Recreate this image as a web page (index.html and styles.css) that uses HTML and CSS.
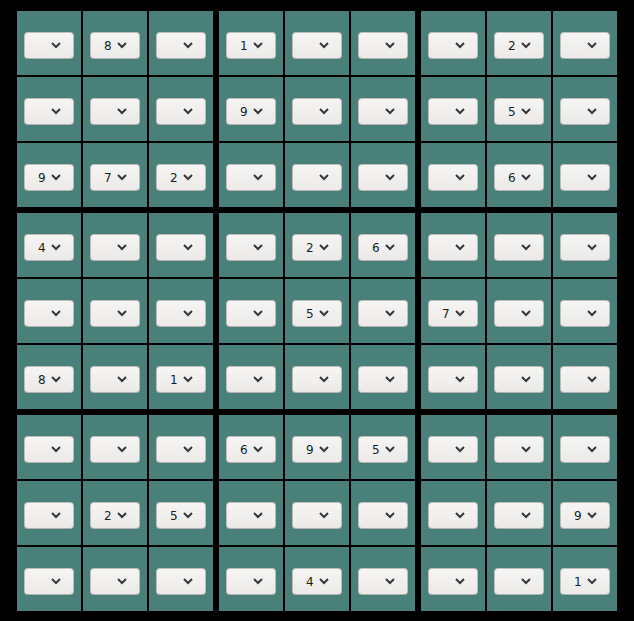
FILE: index.html
```html
<!DOCTYPE html>
<html>
<head>
<meta charset="utf-8">
<title>Sudoku</title>
<link rel="stylesheet" href="styles.css">
</head>
<body>
<svg width="0" height="0" class="defs"><defs><symbol id="chev" viewBox="0 0 10 7"><polyline points="1,1 5,5 9,1" fill="none" stroke="#383838" stroke-width="2"/></symbol></defs></svg>
<div class="board">
  <div class="box">
    <div class="cell"><div class="sel"><span class="val"></span><svg class="chev"><use href="#chev"/></svg></div></div>
    <div class="cell"><div class="sel"><span class="val">8</span><svg class="chev"><use href="#chev"/></svg></div></div>
    <div class="cell"><div class="sel"><span class="val"></span><svg class="chev"><use href="#chev"/></svg></div></div>
    <div class="cell"><div class="sel"><span class="val"></span><svg class="chev"><use href="#chev"/></svg></div></div>
    <div class="cell"><div class="sel"><span class="val"></span><svg class="chev"><use href="#chev"/></svg></div></div>
    <div class="cell"><div class="sel"><span class="val"></span><svg class="chev"><use href="#chev"/></svg></div></div>
    <div class="cell"><div class="sel"><span class="val">9</span><svg class="chev"><use href="#chev"/></svg></div></div>
    <div class="cell"><div class="sel"><span class="val">7</span><svg class="chev"><use href="#chev"/></svg></div></div>
    <div class="cell"><div class="sel"><span class="val">2</span><svg class="chev"><use href="#chev"/></svg></div></div>
  </div>
  <div class="box">
    <div class="cell"><div class="sel"><span class="val">1</span><svg class="chev"><use href="#chev"/></svg></div></div>
    <div class="cell"><div class="sel"><span class="val"></span><svg class="chev"><use href="#chev"/></svg></div></div>
    <div class="cell"><div class="sel"><span class="val"></span><svg class="chev"><use href="#chev"/></svg></div></div>
    <div class="cell"><div class="sel"><span class="val">9</span><svg class="chev"><use href="#chev"/></svg></div></div>
    <div class="cell"><div class="sel"><span class="val"></span><svg class="chev"><use href="#chev"/></svg></div></div>
    <div class="cell"><div class="sel"><span class="val"></span><svg class="chev"><use href="#chev"/></svg></div></div>
    <div class="cell"><div class="sel"><span class="val"></span><svg class="chev"><use href="#chev"/></svg></div></div>
    <div class="cell"><div class="sel"><span class="val"></span><svg class="chev"><use href="#chev"/></svg></div></div>
    <div class="cell"><div class="sel"><span class="val"></span><svg class="chev"><use href="#chev"/></svg></div></div>
  </div>
  <div class="box">
    <div class="cell"><div class="sel"><span class="val"></span><svg class="chev"><use href="#chev"/></svg></div></div>
    <div class="cell"><div class="sel"><span class="val">2</span><svg class="chev"><use href="#chev"/></svg></div></div>
    <div class="cell"><div class="sel"><span class="val"></span><svg class="chev"><use href="#chev"/></svg></div></div>
    <div class="cell"><div class="sel"><span class="val"></span><svg class="chev"><use href="#chev"/></svg></div></div>
    <div class="cell"><div class="sel"><span class="val">5</span><svg class="chev"><use href="#chev"/></svg></div></div>
    <div class="cell"><div class="sel"><span class="val"></span><svg class="chev"><use href="#chev"/></svg></div></div>
    <div class="cell"><div class="sel"><span class="val"></span><svg class="chev"><use href="#chev"/></svg></div></div>
    <div class="cell"><div class="sel"><span class="val">6</span><svg class="chev"><use href="#chev"/></svg></div></div>
    <div class="cell"><div class="sel"><span class="val"></span><svg class="chev"><use href="#chev"/></svg></div></div>
  </div>
  <div class="box">
    <div class="cell"><div class="sel"><span class="val">4</span><svg class="chev"><use href="#chev"/></svg></div></div>
    <div class="cell"><div class="sel"><span class="val"></span><svg class="chev"><use href="#chev"/></svg></div></div>
    <div class="cell"><div class="sel"><span class="val"></span><svg class="chev"><use href="#chev"/></svg></div></div>
    <div class="cell"><div class="sel"><span class="val"></span><svg class="chev"><use href="#chev"/></svg></div></div>
    <div class="cell"><div class="sel"><span class="val"></span><svg class="chev"><use href="#chev"/></svg></div></div>
    <div class="cell"><div class="sel"><span class="val"></span><svg class="chev"><use href="#chev"/></svg></div></div>
    <div class="cell"><div class="sel"><span class="val">8</span><svg class="chev"><use href="#chev"/></svg></div></div>
    <div class="cell"><div class="sel"><span class="val"></span><svg class="chev"><use href="#chev"/></svg></div></div>
    <div class="cell"><div class="sel"><span class="val">1</span><svg class="chev"><use href="#chev"/></svg></div></div>
  </div>
  <div class="box">
    <div class="cell"><div class="sel"><span class="val"></span><svg class="chev"><use href="#chev"/></svg></div></div>
    <div class="cell"><div class="sel"><span class="val">2</span><svg class="chev"><use href="#chev"/></svg></div></div>
    <div class="cell"><div class="sel"><span class="val">6</span><svg class="chev"><use href="#chev"/></svg></div></div>
    <div class="cell"><div class="sel"><span class="val"></span><svg class="chev"><use href="#chev"/></svg></div></div>
    <div class="cell"><div class="sel"><span class="val">5</span><svg class="chev"><use href="#chev"/></svg></div></div>
    <div class="cell"><div class="sel"><span class="val"></span><svg class="chev"><use href="#chev"/></svg></div></div>
    <div class="cell"><div class="sel"><span class="val"></span><svg class="chev"><use href="#chev"/></svg></div></div>
    <div class="cell"><div class="sel"><span class="val"></span><svg class="chev"><use href="#chev"/></svg></div></div>
    <div class="cell"><div class="sel"><span class="val"></span><svg class="chev"><use href="#chev"/></svg></div></div>
  </div>
  <div class="box">
    <div class="cell"><div class="sel"><span class="val"></span><svg class="chev"><use href="#chev"/></svg></div></div>
    <div class="cell"><div class="sel"><span class="val"></span><svg class="chev"><use href="#chev"/></svg></div></div>
    <div class="cell"><div class="sel"><span class="val"></span><svg class="chev"><use href="#chev"/></svg></div></div>
    <div class="cell"><div class="sel"><span class="val">7</span><svg class="chev"><use href="#chev"/></svg></div></div>
    <div class="cell"><div class="sel"><span class="val"></span><svg class="chev"><use href="#chev"/></svg></div></div>
    <div class="cell"><div class="sel"><span class="val"></span><svg class="chev"><use href="#chev"/></svg></div></div>
    <div class="cell"><div class="sel"><span class="val"></span><svg class="chev"><use href="#chev"/></svg></div></div>
    <div class="cell"><div class="sel"><span class="val"></span><svg class="chev"><use href="#chev"/></svg></div></div>
    <div class="cell"><div class="sel"><span class="val"></span><svg class="chev"><use href="#chev"/></svg></div></div>
  </div>
  <div class="box">
    <div class="cell"><div class="sel"><span class="val"></span><svg class="chev"><use href="#chev"/></svg></div></div>
    <div class="cell"><div class="sel"><span class="val"></span><svg class="chev"><use href="#chev"/></svg></div></div>
    <div class="cell"><div class="sel"><span class="val"></span><svg class="chev"><use href="#chev"/></svg></div></div>
    <div class="cell"><div class="sel"><span class="val"></span><svg class="chev"><use href="#chev"/></svg></div></div>
    <div class="cell"><div class="sel"><span class="val">2</span><svg class="chev"><use href="#chev"/></svg></div></div>
    <div class="cell"><div class="sel"><span class="val">5</span><svg class="chev"><use href="#chev"/></svg></div></div>
    <div class="cell"><div class="sel"><span class="val"></span><svg class="chev"><use href="#chev"/></svg></div></div>
    <div class="cell"><div class="sel"><span class="val"></span><svg class="chev"><use href="#chev"/></svg></div></div>
    <div class="cell"><div class="sel"><span class="val"></span><svg class="chev"><use href="#chev"/></svg></div></div>
  </div>
  <div class="box">
    <div class="cell"><div class="sel"><span class="val">6</span><svg class="chev"><use href="#chev"/></svg></div></div>
    <div class="cell"><div class="sel"><span class="val">9</span><svg class="chev"><use href="#chev"/></svg></div></div>
    <div class="cell"><div class="sel"><span class="val">5</span><svg class="chev"><use href="#chev"/></svg></div></div>
    <div class="cell"><div class="sel"><span class="val"></span><svg class="chev"><use href="#chev"/></svg></div></div>
    <div class="cell"><div class="sel"><span class="val"></span><svg class="chev"><use href="#chev"/></svg></div></div>
    <div class="cell"><div class="sel"><span class="val"></span><svg class="chev"><use href="#chev"/></svg></div></div>
    <div class="cell"><div class="sel"><span class="val"></span><svg class="chev"><use href="#chev"/></svg></div></div>
    <div class="cell"><div class="sel"><span class="val">4</span><svg class="chev"><use href="#chev"/></svg></div></div>
    <div class="cell"><div class="sel"><span class="val"></span><svg class="chev"><use href="#chev"/></svg></div></div>
  </div>
  <div class="box">
    <div class="cell"><div class="sel"><span class="val"></span><svg class="chev"><use href="#chev"/></svg></div></div>
    <div class="cell"><div class="sel"><span class="val"></span><svg class="chev"><use href="#chev"/></svg></div></div>
    <div class="cell"><div class="sel"><span class="val"></span><svg class="chev"><use href="#chev"/></svg></div></div>
    <div class="cell"><div class="sel"><span class="val"></span><svg class="chev"><use href="#chev"/></svg></div></div>
    <div class="cell"><div class="sel"><span class="val"></span><svg class="chev"><use href="#chev"/></svg></div></div>
    <div class="cell"><div class="sel"><span class="val">9</span><svg class="chev"><use href="#chev"/></svg></div></div>
    <div class="cell"><div class="sel"><span class="val"></span><svg class="chev"><use href="#chev"/></svg></div></div>
    <div class="cell"><div class="sel"><span class="val"></span><svg class="chev"><use href="#chev"/></svg></div></div>
    <div class="cell"><div class="sel"><span class="val">1</span><svg class="chev"><use href="#chev"/></svg></div></div>
  </div>
</div>
</body>
</html>
```
FILE: styles.css
```css
html, body {
  margin: 0;
  background: #000;
}
body {
  padding: 11px 17px;
  font-family: "DejaVu Sans", sans-serif;
}
.defs {
  position: absolute;
  width: 0;
  height: 0;
}
.board {
  display: grid;
  grid-template-columns: repeat(3, 196px);
  grid-template-rows: repeat(3, 196px);
  gap: 6px;
  width: 600px;
}
.box {
  display: grid;
  grid-template-columns: repeat(3, 64px);
  grid-template-rows: repeat(3, 64px);
  gap: 2px;
}
.cell {
  background: #4a807a;
  display: flex;
  justify-content: center;
  align-items: flex-start;
  padding-top: 21px;
  box-sizing: border-box;
}
.sel {
  width: 50px;
  height: 27px;
  box-sizing: border-box;
  border: 1px solid #bdbdbb;
  border-bottom-color: #b2b2b0;
  border-radius: 4px;
  background: linear-gradient(#f6f5f4, #ebeae8);
  display: flex;
  align-items: center;
  padding-left: 13px;
}
.val {
  width: 13px;
  font-size: 12px;
  color: #1c1c1c;
  line-height: 1;
  padding-top: 1px;
}
.chev {
  display: block;
  width: 10px;
  height: 7px;
}
```
